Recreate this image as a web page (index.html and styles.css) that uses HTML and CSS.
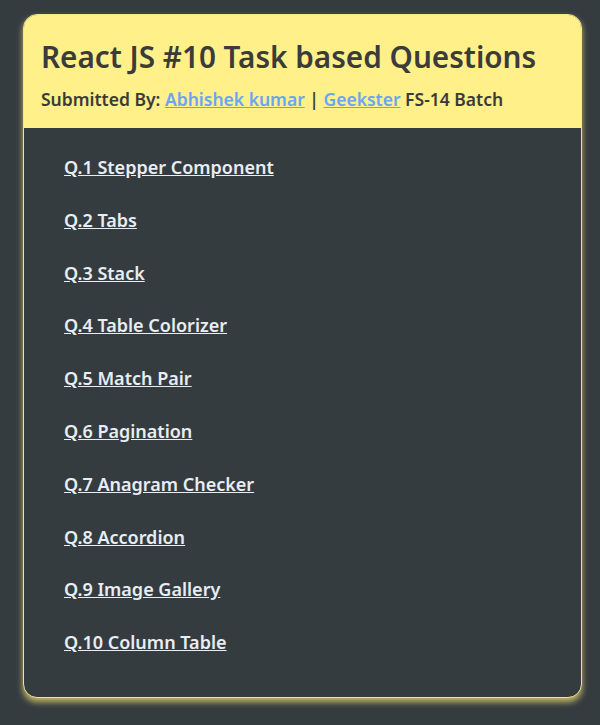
FILE: index.html
```html
<!DOCTYPE html>
<html>
<head>
<meta charset="utf-8">
<link rel="stylesheet" href="styles.css">
</head>
<body>
<div class="card">
  <header class="head">
    <h1 class="title">React JS #10 Task based Questions</h1>
    <p class="sub">Submitted By: <a href="#">Abhishek kumar</a> | <a href="#">Geekster</a> FS-14 Batch</p>
  </header>
  <ul class="list">
    <li><a href="#">Q.1 Stepper Component</a></li>
    <li><a href="#">Q.2 Tabs</a></li>
    <li><a href="#">Q.3 Stack</a></li>
    <li><a href="#">Q.4 Table Colorizer</a></li>
    <li><a href="#">Q.5 Match Pair</a></li>
    <li><a href="#">Q.6 Pagination</a></li>
    <li><a href="#">Q.7 Anagram Checker</a></li>
    <li><a href="#">Q.8 Accordion</a></li>
    <li><a href="#">Q.9 Image Gallery</a></li>
    <li><a href="#">Q.10 Column Table</a></li>
  </ul>
</div>
</body>
</html>
```
FILE: styles.css
```css
html, body { margin: 0; padding: 0; }
body {
  background: #353c40;
  font-family: "Noto Sans", "Open Sans", sans-serif;
  padding: 14px 18px 28px 23px;
}
.card {
  border: 1px solid #f4e48a;
  border-radius: 14px;
  overflow: hidden;
  box-shadow: 0 4px 6px rgba(240, 225, 120, 0.75);
  background: #353c40;
}
.head {
  background: #fff089;
  padding: 22px 17px 17px;
  color: #3b3b3b;
}
.title {
  margin: 0;
  font-size: 29.7px;
  font-weight: 600;
  line-height: 40px;
}
.sub {
  margin: 10px 0 0;
  font-size: 17.5px;
  font-weight: 600;
  line-height: 24px;
}
.sub a { color: #6aa5f5; }
.list {
  list-style: none;
  margin: 0;
  padding: 27px 40px 42px;
}
.list li {
  font-size: 18px;
  font-weight: 600;
  line-height: 25px;
  margin-bottom: 27.8px;
}
.list li:last-child { margin-bottom: 0; }
.list a { color: #e8edf3; }
```
